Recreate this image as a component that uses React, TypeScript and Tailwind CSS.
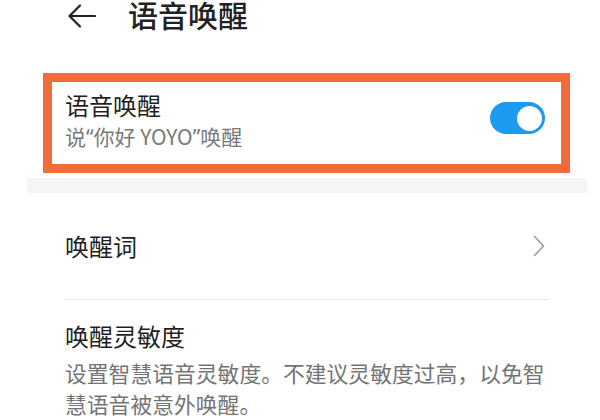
import React from 'react';

export default function App() {
  return (
    <div
      className="w-[600px] h-[420px] overflow-hidden bg-white text-[#1f1f1f]"
      style={{ fontFamily: '"Noto Sans CJK SC", "Noto Sans", sans-serif' }}
    >
      {/* Header */}
      <div className="flex items-center h-[30px] pl-[68px]">
        <svg width="28" height="24" viewBox="0 0 28 24" fill="none" className="mt-[2px]">
          <path d="M27 12H2M12 1.5L1.5 12L12 22.5" stroke="#222" strokeWidth="2.2" strokeLinecap="round" strokeLinejoin="round" />
        </svg>
        <span className="ml-[32px] -mt-[2px] text-[30px] leading-[32px] font-medium text-[#222]">语音唤醒</span>
      </div>

      {/* Voice wake toggle, highlighted */}
      <div className="mt-[43px] ml-[43px] w-[527px] h-[100px] border-[9px] border-[#f26c3b] flex items-start justify-between pl-[13px] pr-[16px]">
        <div className="mt-[9px] flex flex-col">
          <span className="text-[24px] leading-[28px] text-[#1f1f1f]">语音唤醒</span>
          <span className="mt-[3px] text-[21px] leading-[28px] text-[#7a7a7a]">
            说<span className="font-['Noto_Sans',sans-serif]">“</span>你好 YOYO<span className="font-['Noto_Sans',sans-serif]">”</span>唤醒
          </span>
        </div>
        <div className="mt-[20px] w-[55px] h-[32px] rounded-full bg-[#1d9bf0] flex items-center justify-end pr-[1px]">
          <div className="w-[29px] h-[29px] rounded-full bg-white border-2 border-[#1d9bf0]" />
        </div>
      </div>

      {/* Section gap */}
      <div className="mt-[5px] ml-[27px] w-[560px] h-[15px] bg-[#f5f5f5]" />

      {/* Wake word row */}
      <div className="ml-[65px] w-[484px] h-[107px] flex items-center justify-between border-b border-[#e8e8e8] pr-[4px]">
        <span className="text-[24px] leading-[30px]">唤醒词</span>
        <svg width="12" height="22" viewBox="0 0 12 22" fill="none">
          <path d="M1.5 1.5L10.5 11L1.5 20.5" stroke="#9a9a9a" strokeWidth="1.6" strokeLinecap="round" strokeLinejoin="round" />
        </svg>
      </div>

      {/* Sensitivity */}
      <div className="ml-[65px] w-[486px] pt-[21px]">
        <div className="text-[24px] leading-[30px]">唤醒灵敏度</div>
        <p className="mt-[6px] text-[21.8px] leading-[31px] text-[#747474]">
          设置智慧语音灵敏度。不建议灵敏度过高，以免智慧语音被意外唤醒。
        </p>
      </div>
    </div>
  );
}
